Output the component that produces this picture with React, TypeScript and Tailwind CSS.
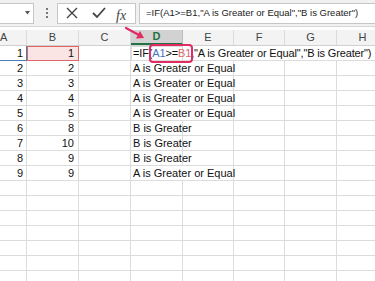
import React from 'react';

const columns = [
  { name: 'A', width: 27 },
  { name: 'B', width: 52 },
  { name: 'C', width: 52 },
  { name: 'D', width: 52 },
  { name: 'E', width: 51 },
  { name: 'F', width: 51 },
  { name: 'G', width: 52 },
  { name: 'H', width: 52 },
];

const rows = [
  { a: '1', b: '1', d: '' },
  { a: '2', b: '2', d: 'A is Greater or Equal' },
  { a: '3', b: '3', d: 'A is Greater or Equal' },
  { a: '4', b: '4', d: 'A is Greater or Equal' },
  { a: '5', b: '5', d: 'A is Greater or Equal' },
  { a: '6', b: '8', d: 'B is Greater' },
  { a: '7', b: '10', d: 'B is Greater' },
  { a: '8', b: '9', d: 'B is Greater' },
  { a: '9', b: '9', d: 'A is Greater or Equal' },
  { a: '', b: '', d: '' },
  { a: '', b: '', d: '' },
  { a: '', b: '', d: '' },
  { a: '', b: '', d: '' },
  { a: '', b: '', d: '' },
  { a: '', b: '', d: '' },
  { a: '', b: '', d: '' },
];

function Toolbar() {
  return (
    <div className="h-[27px] bg-[#f1f1f1] flex items-center border-b border-[#d6d6d6]">
      {/* Name box */}
      <div className="w-[34px] h-[21px] bg-white border border-l-0 border-[#c6c6c6] flex items-center justify-end pr-[3px]">
        <svg width="5" height="4" viewBox="0 0 5 4">
          <path d="M0 0 L5 0 L2.5 3.5 Z" fill="#555" />
        </svg>
      </div>
      <div className="ml-[12px] flex flex-col gap-[2px]">
        <span className="w-[2px] h-[2px] bg-[#777]" />
        <span className="w-[2px] h-[2px] bg-[#777]" />
        <span className="w-[2px] h-[2px] bg-[#777]" />
      </div>
      {/* Cancel / Enter / fx */}
      <div className="ml-[9px] w-[79px] h-[21px] bg-white border border-[#c6c6c6] relative flex items-center">
        <svg className="absolute left-[8px]" width="12" height="12" viewBox="0 0 12 12">
          <path d="M1 1 L11 11 M11 1 L1 11" stroke="#444" strokeWidth="1.4" fill="none" />
        </svg>
        <svg className="absolute left-[34px]" width="14" height="12" viewBox="0 0 14 12">
          <path d="M1 6 L5 10 L13 1" stroke="#444" strokeWidth="1.8" fill="none" />
        </svg>
        <span className="absolute left-[58px] top-[1px] text-[14px] italic text-[#444] font-['Liberation_Serif',serif]">
          fx
        </span>
      </div>
      {/* Formula box */}
      <div className="ml-[3px] flex-1 h-[21px] bg-white border border-r-0 border-[#c6c6c6] flex items-center pl-[6px]">
        <span className="text-[9.5px] text-[#222] whitespace-nowrap">
          =IF(A1&gt;=B1,"A is Greater or Equal","B is Greater")
        </span>
      </div>
    </div>
  );
}

function HeaderRow() {
  return (
    <div className="flex h-[16px] bg-[#f3f3f3] border-b border-[#d0d0d0]">
      {columns.map((col) => (
        <div
          key={col.name}
          style={{ width: col.width }}
          className={`shrink-0 flex items-center text-[11px] border-r ${
            col.name === 'A' ? 'justify-start' : 'justify-center'
          } ${
            col.name === 'D'
              ? 'bg-[#d2d2d2] text-[#217346] font-bold border-b-2 border-b-[#217346] border-r-[#bdbdbd]'
              : 'text-[#444] border-[#dadada]'
          }`}
        >
          {col.name}
        </div>
      ))}
    </div>
  );
}

function Cell({ width, children, className = '' }: { width: number; children?: React.ReactNode; className?: string }) {
  return (
    <div
      style={{ width }}
      className={`shrink-0 h-[15px] border-r border-b border-[#dcdcdc] flex items-center text-[11px] leading-none text-[#111] ${className}`}
    >
      {children}
    </div>
  );
}

export default function App() {
  return (
    <div className="w-[375px] h-[281px] overflow-hidden relative bg-white font-['Liberation_Sans',Arial,sans-serif]">
      <Toolbar />
      <div className="h-[3px] bg-white" />
      <HeaderRow />

      {rows.map((row, i) => {
        const first = i === 0;
        const long = row.d === 'A is Greater or Equal';
        return (
          <div key={i} className="flex">
            <Cell width={27} className={`justify-end pr-[3px] ${first ? 'border-b-[#4a7ebb] border-r-[#4a7ebb]' : ''}`}>
              {row.a}
            </Cell>
            <Cell
              width={52}
              className={`justify-end pr-[4px] ${first ? 'bg-[#fbe4e4] border border-[#e06666]' : ''}`}
            >
              {row.b}
            </Cell>
            <Cell width={52} />
            {first ? (
              <>
                <Cell width={52} className="relative border border-[#217346] z-10 pl-[1px]">
                  <span className="whitespace-nowrap tracking-[-0.15px]">
                    =IF(<span className="text-[#4472c4]">A1</span>&gt;=<span className="text-[#e06666]">B1</span>,"A is Greater or Equal","B is Greater")
                  </span>
                </Cell>
                <Cell width={206} className="border-r-0" />
              </>
            ) : long ? (
              <>
                <Cell width={103} className="pl-[2px] whitespace-nowrap">{row.d}</Cell>
                <Cell width={51} />
                <Cell width={52} />
                <Cell width={52} />
              </>
            ) : (
              <>
                <Cell width={52} className="pl-[2px] whitespace-nowrap">{row.d}</Cell>
                <Cell width={51} />
                <Cell width={51} />
                <Cell width={52} />
                <Cell width={52} />
              </>
            )}
          </div>
        );
      })}

      {/* Annotation: arrow pointing at column D */}
      <svg className="absolute left-[124px] top-[26px]" width="24" height="16" viewBox="0 0 24 16">
        <path d="M2 2 L15 9" stroke="#e22a63" strokeWidth="2.2" strokeLinecap="round" fill="none" />
        <path d="M20 12 L12 12.5 L16 5 Z" fill="#e22a63" />
      </svg>
      {/* Annotation: highlighted reference */}
      <div className="absolute left-[149px] top-[44px] w-[44px] h-[19px] rounded-[4px] border-2 border-[#e22a63] z-20" />
    </div>
  );
}
